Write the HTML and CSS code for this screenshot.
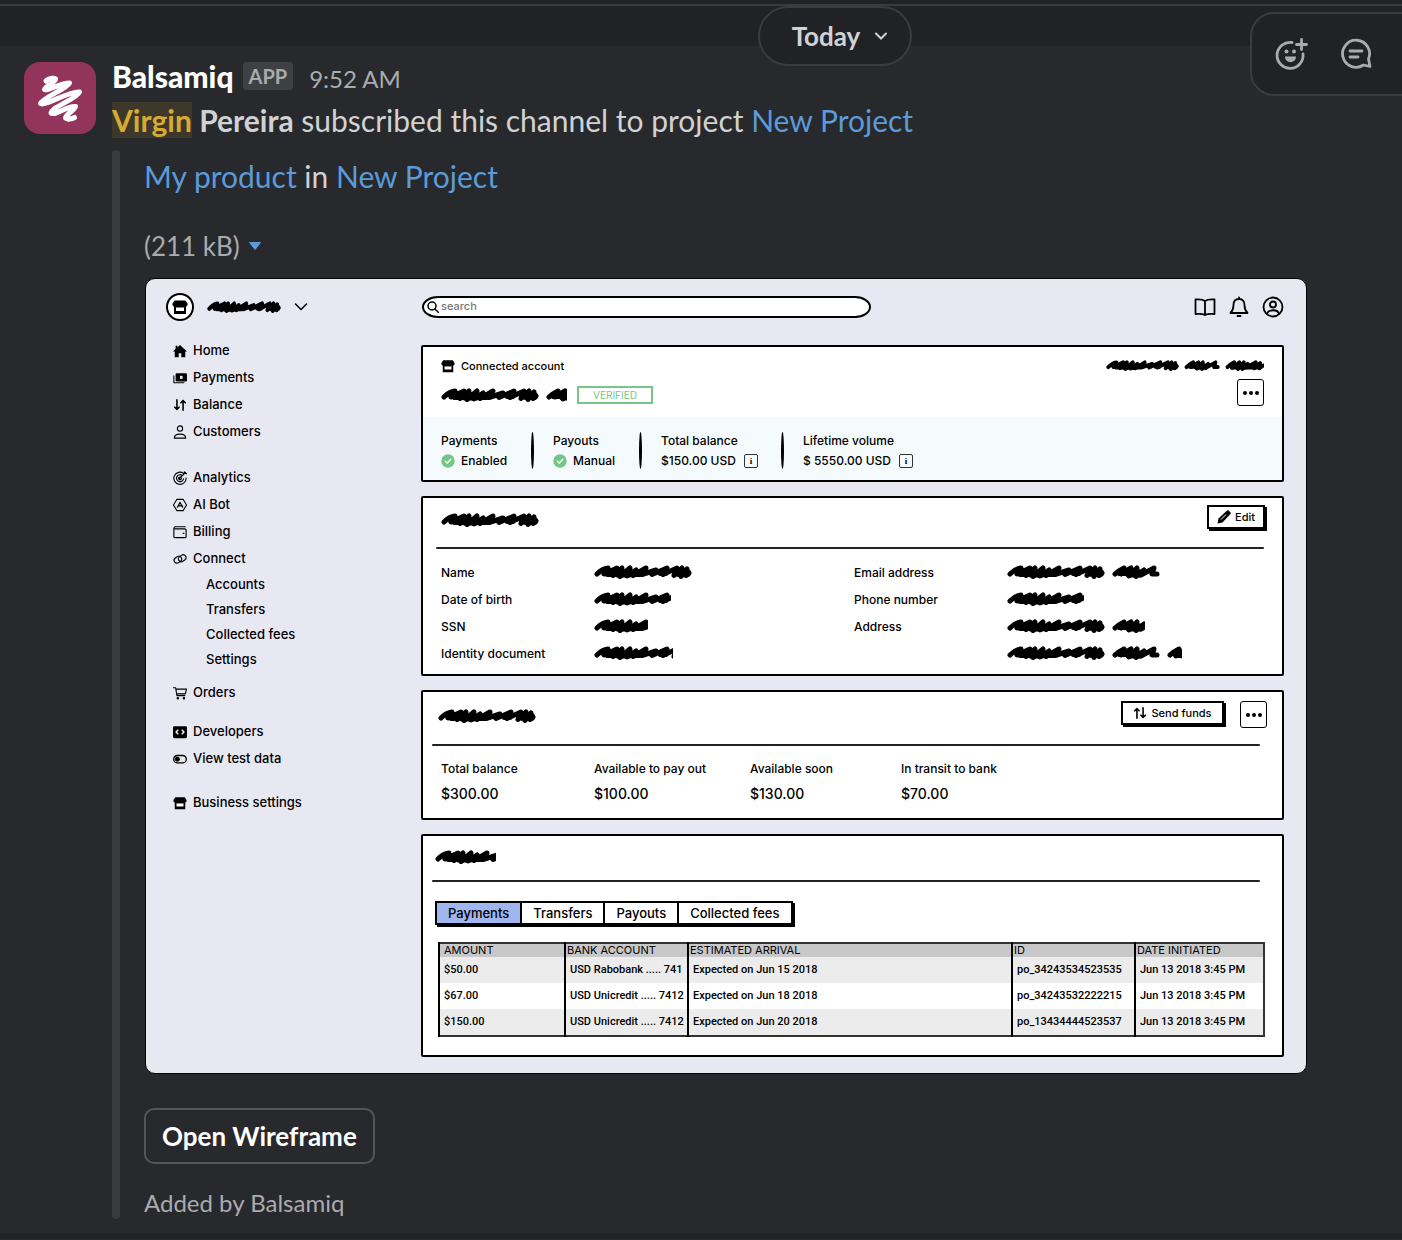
FILE: index.html
```html
<!DOCTYPE html>
<html lang="en">
<head>
<meta charset="utf-8">
<meta name="viewport" content="width=device-width, initial-scale=1">
<title>Balsamiq in channel</title>
<link rel="stylesheet" href="styles.css">
</head>
<body>
<svg class="defs" aria-hidden="true">
  <symbol id="scribble">
    <g fill="none" stroke="#000" stroke-linecap="round" stroke-linejoin="round">
      <path d="M3 9C6 6 10 3.500 14 3L10 9L23 3L19 10.500L28 3L26 11.500L36 3L33 11L42 5L39 10.500L52 3L48 9.500L62 5L58 9.500L73 3L69 9.500L83 3L80 10.500L88 3L87 11.500L93 4L92 10.500L95 8M108 9C111 6 115 4 117 3L114 9L124 3L122 11L130 3L129 11.500L137 5L134 10L147 3L145 9L150 9M163 9C166 6 170 4 172 3L169 10L179 3L177 11.500L185 3L183 11.500L190 5L188 9.500L201 3L199 10.500L207 4L206 10.500L211 7" stroke-width="5"/>
      <path d="M24 8.500H35M85 8H93M122 8.500H133M170 8H176M180 8H206" stroke-width="8"/>
      <path d="M13 10H20M36 10H46M56 8H60M66 9H72M112 9H120" stroke-width="4"/>
    </g>
  </symbol>
  <symbol id="store" viewBox="0 0 16 16">
    <path d="M2.500 1.500h11l2 3v1.500a2 2 0 0 1-1.500 1.500V15H2V7.500A2 2 0 0 1 .5 6V4.500z"/><path d="M4 8.500h8v3.500H4z" class="hole"/>
  </symbol>
  <symbol id="updown" viewBox="0 0 16 16">
    <path d="M4.500 2v11M2 10.500 4.500 13 7 10.500M11.500 14V3M9 5.500 11.500 3 14 5.500" fill="none" stroke="#000" stroke-width="1.800" stroke-linecap="round"/>
  </symbol>
  <symbol id="check" viewBox="0 0 14 14">
    <circle cx="7" cy="7" r="6.700" fill="#74c787"/><path d="M4.300 7.200 6.300 9.100 9.800 5.300" fill="none" stroke="#fff" stroke-width="1.300" stroke-linecap="round"/>
  </symbol>
  <symbol id="dots" viewBox="0 0 18 6"><circle cx="3" cy="3" r="2"/><circle cx="9" cy="3" r="2"/><circle cx="15" cy="3" r="2"/></symbol>
</svg>

<div class="topbar"></div>
<button class="date" type="button">Today
  <svg width="14" height="10" viewBox="0 0 14 10"><path d="M2 2.500 7 7.500 12 2.500" fill="none" stroke="currentColor" stroke-width="2" stroke-linecap="round"/></svg>
</button>
<div class="actions">
  <button type="button" aria-label="Add reaction">
    <svg width="34" height="34" viewBox="0 0 34 34" fill="none" stroke="currentColor" stroke-width="2.800" stroke-linecap="round"><path d="M18 5.500a13 13 0 1 0 11 11.500"/><path d="M27.500 2.500v10M22.500 7.500h10"/><circle cx="12.500" cy="14.500" r="2" fill="currentColor" stroke="none"/><circle cx="20" cy="14.500" r="2" fill="currentColor" stroke="none"/><path d="M11 19.500h11c0 7.500-11 7.500-11 0z" fill="currentColor" stroke="none"/></svg>
  </button>
  <button type="button" aria-label="Reply in thread">
    <svg width="34" height="34" viewBox="0 0 34 34" fill="none" stroke="currentColor" stroke-width="2.800" stroke-linecap="round" stroke-linejoin="round"><path d="M28.500 22a13.500 13.500 0 1 0-5 6l6.500 1.500z"/><path d="M10 14h12M10 20h8"/></svg>
  </button>
</div>

<main class="message">
  <svg class="avatar" viewBox="0 0 72 72" role="img" aria-label="Balsamiq"><rect width="72" height="72" rx="16" fill="#92345b"/><path d="M22 19C25 15.500 32 15.500 31.500 17.500C30 21 20 25 20.500 27.500C23 29.500 39 20 45.500 21C43 27 18 36 16.500 41.500C20 45 47 28 55.500 30C53 37 29 44 27 51C32 54 44 43 51.500 44.500C50 49 42 52 41.500 56C43 58 48 57 50.500 55.500" fill="none" stroke="#fff" stroke-width="5" stroke-linecap="round" stroke-linejoin="round"/></svg>
  <div class="body">
    <div class="byline"><strong>Balsamiq</strong><span class="app">APP</span><time>9:52 AM</time></div>
    <p class="text"><b><mark>Virgin</mark> Pereira</b> subscribed this channel to project <a href="#project">New Project</a></p>
    <div class="attachment">
      <p class="text title"><a href="#product">My product</a> in <a href="#project">New Project</a></p>
      <p class="size">(211 kB) <svg width="14" height="10" viewBox="0 0 14 10"><path d="M1.500 1.500h11L7 8.500z" fill="#5b9bd8" stroke="#5b9bd8" stroke-linejoin="round"/></svg></p>

      <section class="wire">
        <aside class="side">
          <div class="account">
            <span class="logo"><svg width="16" height="16"><use href="#store"/></svg></span>
            <svg width="74" height="12" viewBox="0 0 98 14" preserveAspectRatio="none"><use href="#scribble"/></svg>
            <svg width="14" height="10" viewBox="0 0 14 10"><path d="M1.500 2 7 7.500 12.500 2" fill="none" stroke="#000" stroke-width="1.500" stroke-linecap="round"/></svg>
          </div>
          <nav>
            <ul>
              <li><a href="#"><svg viewBox="0 0 16 16"><path d="M8 1 16 8.500H14V15H9.500V10.500H6.500V15H2V8.500H0L3 5.500V2h2v2z"/></svg>Home</a></li>
              <li><a href="#"><svg viewBox="0 0 16 16"><rect x="3" y="2.500" width="13" height="9.500" rx="1.500"/><path d="M1 5v8.500h12" fill="none" stroke="#000" stroke-width="1.200"/><path d="M8 5.500h3v3.500H8z" fill="#e8e8f2"/></svg>Payments</a></li>
              <li><a href="#"><svg><use href="#updown"/></svg>Balance</a></li>
              <li><a href="#"><svg viewBox="0 0 16 16" class="line"><circle cx="8" cy="4" r="3"/><path d="M1.500 15c0-6 13-6 13 0z"/></svg>Customers</a></li>
            </ul>
            <ul>
              <li><a href="#"><svg viewBox="0 0 16 16" class="line"><path d="M12 2.500A7 7 0 1 0 15 8M10.500 5A4 4 0 1 0 12 9M7.500 8.500 14.500 1.500M13 1l.5 1.500 2 .5"/><circle cx="8" cy="8.500" r="1.500"/></svg>Analytics</a></li>
              <li><a href="#"><svg viewBox="0 0 16 16" class="line"><path d="M4.500 1.500h7L15.500 8l-4 6.500h-7L.5 8zM5 10.500 8 5l3 5.500M7 9h4"/></svg>AI Bot</a></li>
              <li><a href="#"><svg viewBox="0 0 16 16" class="line"><path d="M1 4V13a1.500 1.500 0 0 0 1.500 1.500h11A1.500 1.500 0 0 0 15 13V6a1.500 1.500 0 0 0-1.500-1.500H2.500a1.200 1.200 0 0 1 0-2.500H14M11.500 9.500h1"/></svg>Billing</a></li>
              <li><a href="#"><svg viewBox="0 0 16 16" class="line"><rect x="1" y="5.500" width="9" height="6.500" rx="3.200" transform="rotate(-35 5.500 8.700)"/><rect x="6" y="4" width="9" height="6.500" rx="3.200" transform="rotate(-35 10.500 7.200)"/></svg>Connect</a>
                <ul class="sub">
                  <li><a href="#">Accounts</a></li>
                  <li><a href="#">Transfers</a></li>
                  <li><a href="#">Collected fees</a></li>
                  <li><a href="#">Settings</a></li>
                </ul>
              </li>
              <li class="orders"><a href="#"><svg viewBox="0 0 16 16" class="line"><path d="M.5 2H3l1.500 9H13.500M3.500 3.500h12l-1.500 5.500H4.500"/><circle cx="5.500" cy="14" r=".8"/><circle cx="12.500" cy="14" r=".8"/></svg>Orders</a></li>
            </ul>
            <ul class="tight">
              <li><a href="#"><svg viewBox="0 0 16 16"><rect y="1.500" width="16" height="13.500" rx="1.500"/><path d="M6 5.500 3.500 8 6 10.500M10 5.500 12.500 8 10 10.500" fill="none" stroke="#fff" stroke-width="1.500"/></svg>Developers</a></li>
              <li><a href="#"><svg viewBox="0 0 16 16"><rect x=".8" y="4" width="14.400" height="8.500" rx="4.200" fill="none" stroke="#000" stroke-width="1.500"/><circle cx="5" cy="8.200" r="2.800"/></svg>View test data</a></li>
            </ul>
            <ul class="last">
              <li><a href="#"><svg><use href="#store"/></svg>Business settings</a></li>
            </ul>
          </nav>
        </aside>

        <div class="main">
          <header class="head">
            <label class="search">
              <svg width="12" height="12" viewBox="0 0 12 12" class="line"><circle cx="5" cy="5" r="4"/><path d="M8 8l3.500 3.500"/></svg>
              <input type="search" placeholder="search" aria-label="Search">
            </label>
            <div class="icons">
              <svg width="22" height="22" viewBox="0 0 22 22" class="line"><path d="M11 5C8 3 5 3.500 1.500 3.500V18C5 18 8 17.500 11 19 14 17.500 17 18 20.500 18V3.500C17 3.500 14 3 11 5zV19"/></svg>
              <svg width="22" height="22" viewBox="0 0 22 22" class="line"><path d="M11 1.500V3M11 3C7 3 5.500 6 5.500 9 5.500 13 4 15.500 2.500 17h17C18 15.500 16.500 13 16.500 9 16.500 6 15 3 11 3zM9.500 20h3"/></svg>
              <svg width="22" height="22" viewBox="0 0 22 22" class="line"><circle cx="11" cy="11" r="9.500"/><circle cx="11" cy="8.500" r="3"/><path d="M5 18c1-5 11-5 12 0"/></svg>
            </div>
          </header>

          <section class="card">
            <div class="connected">
              <div>
                <p class="kicker"><svg width="14" height="14"><use href="#store"/></svg>Connected account</p>
                <p class="who"><svg width="126" height="14"><use href="#scribble"/></svg><span class="badge">VERIFIED</span></p>
              </div>
              <div class="right">
                <svg width="158" height="11" viewBox="0 0 212 14" preserveAspectRatio="none"><use href="#scribble"/></svg>
                <button class="more" type="button" aria-label="More"><svg width="18" height="6"><use href="#dots"/></svg></button>
              </div>
            </div>
            <div class="stats">
              <div><h3>Payments</h3><p><svg width="14" height="14"><use href="#check"/></svg>Enabled</p></div>
              <div><h3>Payouts</h3><p><svg width="14" height="14"><use href="#check"/></svg>Manual</p></div>
              <div><h3>Total balance</h3><p>$150.00 USD <span class="info">i</span></p></div>
              <div><h3>Lifetime volume</h3><p>$ 5550.00 USD <span class="info">i</span></p></div>
            </div>
          </section>

          <section class="card">
            <div class="bar">
              <svg width="98" height="14"><use href="#scribble"/></svg>
              <button class="push" type="button"><svg width="14" height="14" viewBox="0 0 14 14"><path d="M.5 13.500 1.500 8.500 9 1.500 11 0 14 3 12.500 5 5.500 12.500z"/><path d="M4 9.500 9 4.500" stroke="#fff"/></svg>Edit</button>
            </div>
            <hr>
            <div class="details">
              <dl>
                <dt>Name</dt><dd><svg width="98" height="14"><use href="#scribble"/></svg></dd>
                <dt>Date of birth</dt><dd><svg width="77" height="14"><use href="#scribble"/></svg></dd>
                <dt>SSN</dt><dd><svg width="54" height="14"><use href="#scribble"/></svg></dd>
                <dt>Identity document</dt><dd><svg width="79" height="14"><use href="#scribble"/></svg></dd>
              </dl>
              <dl>
                <dt>Email address</dt><dd><svg width="153" height="14"><use href="#scribble"/></svg></dd>
                <dt>Phone number</dt><dd><svg width="77" height="14"><use href="#scribble"/></svg></dd>
                <dt>Address</dt><dd><svg width="138" height="14"><use href="#scribble"/></svg></dd>
                <dd><svg width="175" height="14"><use href="#scribble"/></svg></dd>
              </dl>
            </div>
          </section>

          <section class="card">
            <div class="bar shifted">
              <svg width="98" height="14"><use href="#scribble"/></svg>
              <button class="push wide" type="button"><svg class="flip" width="14" height="14"><use href="#updown"/></svg>Send funds</button>
              <button class="more" type="button" aria-label="More"><svg width="18" height="6"><use href="#dots"/></svg></button>
            </div>
            <hr class="shifted">
            <dl class="sums">
              <div><dt>Total balance</dt><dd>$300.00</dd></div>
              <div><dt>Available to pay out</dt><dd>$100.00</dd></div>
              <div><dt>Available soon</dt><dd>$130.00</dd></div>
              <div><dt>In transit to bank</dt><dd>$70.00</dd></div>
            </dl>
          </section>

          <section class="card">
            <div class="bar short"><svg width="61" height="14"><use href="#scribble"/></svg></div>
            <hr class="shifted">
            <div class="tabs">
              <button type="button" class="on">Payments</button><button type="button">Transfers</button><button type="button">Payouts</button><button type="button">Collected fees</button>
            </div>
            <table>
              <colgroup><col class="c1"><col class="c2"><col><col class="c2"><col class="c3"></colgroup>
              <thead><tr><th>AMOUNT</th><th>BANK ACCOUNT</th><th>ESTIMATED ARRIVAL</th><th>ID</th><th>DATE INITIATED</th></tr></thead>
              <tbody>
                <tr><td>$50.00</td><td>USD Rabobank ..... 741</td><td>Expected on Jun 15 2018</td><td>po_34243534523535</td><td>Jun 13 2018 3:45 PM</td></tr>
                <tr><td>$67.00</td><td>USD Unicredit ..... 7412</td><td>Expected on Jun 18 2018</td><td>po_34243532222215</td><td>Jun 13 2018 3:45 PM</td></tr>
                <tr><td>$150.00</td><td>USD Unicredit ..... 7412</td><td>Expected on Jun 20 2018</td><td>po_13434444523537</td><td>Jun 13 2018 3:45 PM</td></tr>
              </tbody>
            </table>
          </section>
        </div>
      </section>

      <button class="open" type="button">Open Wireframe</button>
      <p class="added">Added by Balsamiq</p>
    </div>
  </div>
</main>
</body>
</html>
```

FILE: styles.css
```css
* { box-sizing: border-box; }
body, p, h3, ul, dl, dd, hr { margin: 0; padding: 0; }
ul { list-style: none; }
svg { display: block; flex: none; }
button { font: inherit; color: inherit; background: none; border: 0; padding: 0; }
a { color: #5b9bd8; text-decoration: none; }

body {
  position: relative;
  background: #27292d;
  color: #d1d2d3;
  font-family: Lato, "Liberation Sans", sans-serif;
}
.defs { position: absolute; width: 0; height: 0; }

/* channel chrome */
.topbar {
  height: 46px;
  background: linear-gradient(#212226 4px, #3a3b3f 4px 6px, #212226 6px);
}
.date {
  position: absolute;
  top: 6px;
  left: calc(50% + 57px);
  display: flex;
  align-items: center;
  justify-content: center;
  gap: 14px;
  width: 154px;
  height: 60px;
  padding-left: 10px;
  border: 2px solid #3a3b3f;
  border-radius: 30px;
  background: #212226;
  font-size: 26px;
  font-weight: 700;
}
.actions {
  position: absolute;
  top: 12px;
  right: 0;
  display: flex;
  align-items: center;
  gap: 32px;
  height: 84px;
  padding: 0 28px 0 22px;
  border: 2px solid #3a3b3f;
  border-right: 0;
  border-radius: 24px 0 0 24px;
  background: #212226;
  color: #ababad;
}

/* message */
.message {
  display: flex;
  gap: 16px;
  padding: 8px 0 14px 24px;
  border-bottom: 6px solid #212226;
}
.avatar { width: 72px; height: 72px; margin-top: 8px; }
.body { flex: 1; min-width: 0; }
.byline { display: flex; align-items: center; height: 44px; }
.byline strong { color: #fff; font-size: 30px; font-weight: 900; }
.app {
  margin: 0 16px 0 9px;
  padding: 0 6px;
  border-radius: 4px;
  background: #3f4044;
  color: #ababad;
  font-size: 20px;
  font-weight: 700;
  line-height: 28px;
}
time { padding-top: 4px; color: #ababad; font-size: 24px; }
.text { font-size: 30px; line-height: 44px; }
mark { background: #3e382b; color: #d6ab33; }
.attachment {
  position: relative;
  margin-top: 8px;
  padding: 4px 95px 0 32px;
}
.attachment::before {
  content: "";
  position: absolute;
  inset: 0 auto 0 0;
  width: 8px;
  border-radius: 4px;
  background: #3a3b3f;
}
.size {
  display: flex;
  align-items: center;
  gap: 8px;
  margin: 32px 0 16px;
  color: #ababad;
  font-size: 26px;
  line-height: 32px;
}
.open {
  display: block;
  height: 56px;
  margin-top: 34px;
  padding: 0 16px;
  border: 2px solid #545559;
  border-radius: 10px;
  color: #fff;
  font-size: 26px;
  font-weight: 700;
}
.added {
  padding-top: 23px;
  color: #ababad;
  font-size: 24px;
  line-height: 32px;
}

/* wireframe preview */
.wire {
  display: grid;
  grid-template-columns: 275px 1fr;
  margin-left: 1px;
  padding: 14px 22px 16px 0;
  border: 1px solid #000;
  border-radius: 10px;
  background: #e8e8f2;
  color: #000;
  font: 500 12px/18px Inter, "Liberation Sans", sans-serif;
}
.wire a { color: #000; }
.line { fill: none; stroke: #000; stroke-width: 1.5px; stroke-linejoin: round; stroke-linecap: round; }
.icons .line { stroke-width: 1.8px; }
.hole { fill: #fff; }
.account { display: flex; align-items: center; gap: 13px; height: 28px; padding-left: 20px; }
.logo {
  display: grid;
  place-items: center;
  width: 28px;
  height: 28px;
  border: 2px solid #000;
  border-radius: 50%;
  background: #fff;
}
nav { padding: 16px 0 0 27px; font-size: 13px; line-height: 27px; }
nav ul + ul { margin-top: 19px; }
nav ul.tight { margin-top: 12px; }
nav ul.last { margin-top: 17px; }
nav a { display: flex; align-items: center; gap: 6px; }
nav svg { width: 14px; height: 14px; }
nav .line { stroke-width: 1.3px; }
.sub { padding-left: 33px; line-height: 25px; }
.orders { margin-top: 7px; }

.main { display: grid; gap: 14px; align-content: start; min-width: 0; }
.head { display: flex; justify-content: space-between; align-items: center; height: 28px; margin-bottom: 10px; }
.search {
  display: flex;
  align-items: center;
  gap: 2px;
  width: 449px;
  height: 22px;
  margin-left: 1px;
  padding: 0 3px;
  border: 2px solid #000;
  border-radius: 16px / 11px;
  background: #fff;
}
.search input {
  flex: 1;
  min-width: 0;
  padding: 0 0 2px;
  border: 0;
  outline: 0;
  background: none;
  font: inherit;
  font-size: 11px;
}
.search input::placeholder { color: #77777d; }
.icons { display: flex; gap: 12px; }

.card { border: 2px solid #000; border-radius: 2px; background: #fff; }
.connected { display: flex; justify-content: space-between; padding: 10px 18px 11px; }
.kicker { display: flex; align-items: center; gap: 6px; font-size: 11px; }
.who { display: flex; align-items: center; gap: 10px; height: 20px; margin-top: 10px; }
.badge {
  width: 76px;
  border: 2px solid #74c787;
  color: #74c787;
  font-size: 10px;
  font-weight: 400;
  line-height: 14px;
  text-align: center;
}
.right { display: flex; flex-direction: column; align-items: flex-end; gap: 8px; padding-top: 3px; }
.more {
  display: grid;
  place-items: center;
  width: 27px;
  height: 27px;
  border: 1px solid #000;
  border-radius: 3px;
  background: #fff;
}
.stats { display: flex; padding: 15px 18px 9px; background: #f5fafd; }
.stats > div { position: relative; }
.stats > div:nth-child(1) { width: 90px; }
.stats > div:nth-child(2) { width: 108px; }
.stats > div:nth-child(3) { width: 142px; }
.stats > div + div { padding-left: 22px; }
.stats > div + div::before {
  content: "";
  position: absolute;
  left: 0;
  top: 0;
  bottom: 2px;
  width: 3px;
  border-radius: 50%;
  background: #000;
}
.stats h3 { font: inherit; }
.stats p { display: flex; align-items: center; gap: 6px; line-height: 21px; }
.info {
  width: 14px;
  height: 14px;
  margin-left: 2px;
  border: 1px solid #333;
  border-radius: 2px;
  font: 700 9px/12px "Liberation Serif", serif;
  text-align: center;
}

.bar { display: flex; align-items: flex-start; height: 49px; padding: 7px 15px 0 18px; }
.bar > svg { margin: 8px auto 0 0; }
.bar.shifted { height: 52px; padding-top: 9px; padding-left: 15px; gap: 14px; }
.bar.short { height: 44px; padding-left: 12px; padding-top: 6px; }
.push {
  display: flex;
  align-items: center;
  justify-content: center;
  gap: 4px;
  width: 58px;
  height: 24px;
  margin-right: 2px;
  border: 2px solid #000;
  box-shadow: 2px 2px 0 #000;
  background: #fff;
  font-size: 11px;
}
.push.wide { width: 103px; }
.flip { transform: scaleX(-1); }
hr { height: 2px; margin: 0 18px 0 13px; border: 0; border-radius: 1px; background: #222; }
hr.shifted { margin: 0 22px 0 9px; }
.details { display: grid; grid-template-columns: 413px 1fr; padding: 10px 18px 7px; }
.details dl { display: grid; grid-template-columns: 153px 1fr; grid-auto-rows: 27px; align-items: center; }
.details dd { grid-column: 2; padding-bottom: 2px; }
.sums { display: grid; grid-template-columns: 153px 156px 151px 1fr; padding: 14px 18px 12px; }
.sums dd { padding-top: 4px; font-size: 14px; line-height: 24px; }

.tabs {
  display: flex;
  width: max-content;
  margin: 19px 0 0 12px;
  border: 2px solid #000;
  box-shadow: 2px 2px 0 #000;
  font-size: 13px;
  line-height: 20px;
}
.tabs button { padding: 0 11px; }
.tabs button + button { border-left: 2px solid #000; }
.tabs .on { background: #9fb7ee; }
table {
  width: calc(100% - 32px);
  margin: 17px 0 18px 15px;
  border: 2px solid #333;
  border-collapse: collapse;
  table-layout: fixed;
  font-size: 11px;
  white-space: nowrap;
}
th, td { padding: 0 0 0 4px; border-left: 2px solid #000; text-align: left; }
th { padding-left: 1px; background: #c8c8c8; font-weight: 400; line-height: 13px; }
th:first-child { padding-left: 4px; }
td { font-family: Roboto, "Liberation Sans", sans-serif; line-height: 26px; }
tbody tr:nth-child(odd) { background: #ececec; }
.c1 { width: 126px; }
.c2 { width: 123px; }
.c3 { width: 129px; }
```
